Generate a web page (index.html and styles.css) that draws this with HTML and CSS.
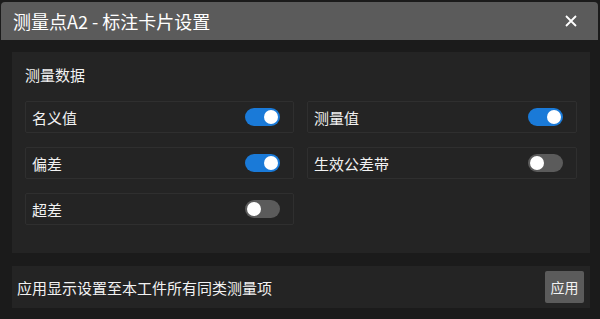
FILE: index.html
```html
<!DOCTYPE html>
<html>

<head>
    <meta charset="utf-8">
    <title>标注卡片设置</title>
    <link rel="stylesheet" href="styles.css">
</head>

<body>
    <div class="dialogo">
        <div class="cabecalho">
            <span class="titulo">测量点A2 - 标注卡片设置</span>
            <span class="fechar">
                <svg width="14" height="14" viewBox="0 0 14 14">
                    <path d="M2 2 L12 12 M12 2 L2 12" stroke="#ffffff" stroke-width="1.8" fill="none" />
                </svg>
            </span>
        </div>

        <div class="corpo">
            <div class="painel">
                <div class="painel-titulo">测量数据</div>
                <div class="grade">
                    <div class="item">
                        <span>名义值</span>
                        <span class="chave ligada"></span>
                    </div>
                    <div class="item">
                        <span>测量值</span>
                        <span class="chave ligada"></span>
                    </div>
                    <div class="item">
                        <span>偏差</span>
                        <span class="chave ligada"></span>
                    </div>
                    <div class="item">
                        <span>生效公差带</span>
                        <span class="chave"></span>
                    </div>
                    <div class="item">
                        <span>超差</span>
                        <span class="chave"></span>
                    </div>
                </div>
            </div>

            <div class="rodape">
                <span>应用显示设置至本工件所有同类测量项</span>
                <button class="botao">应用</button>
            </div>
        </div>
    </div>
</body>

</html>
```

FILE: styles.css
```css
* {
    box-sizing: border-box;
    font-family: "Noto Sans CJK SC", "Noto Sans", sans-serif;
}

body {
    margin: 0;
    background-color: #1b1b1b;
    color: #f2f2f2;
}

.dialogo {
    margin: 2px 2px 0 1px;
    background-color: #1b1b1b;
}

.cabecalho {
    display: flex;
    align-items: center;
    justify-content: space-between;
    height: 38px;
    padding: 0 20px 0 12px;
    background-color: #5b5b5b;
    border-radius: 4px 4px 0 0;
}

.titulo {
    font-size: 18px;
    color: #ffffff;
}

.fechar {
    display: flex;
}

.corpo {
    padding: 12px 8px 12px 11px;
}

.painel {
    background-color: #242424;
    padding: 12px 13px 28px 13px;
}

.painel-titulo {
    font-size: 15px;
    line-height: 22px;
    margin-bottom: 15px;
}

.grade {
    display: grid;
    grid-template-columns: 269px 270px;
    column-gap: 13px;
    row-gap: 14px;
}

.item {
    display: flex;
    align-items: center;
    justify-content: space-between;
    height: 32px;
    padding: 0 13px 0 6px;
    border: 1px solid #2f2f2f;
    border-radius: 2px;
    font-size: 15px;
}

.chave {
    position: relative;
    width: 35px;
    height: 18px;
    border-radius: 9px;
    background-color: #5b5b5b;
}

.chave::after {
    content: "";
    position: absolute;
    top: 2px;
    left: 2px;
    width: 14px;
    height: 14px;
    border-radius: 50%;
    background-color: #ffffff;
}

.chave.ligada {
    background-color: #1a7ad8;
}

.chave.ligada::after {
    left: 19px;
}

.rodape {
    display: flex;
    align-items: center;
    justify-content: space-between;
    height: 42px;
    margin-top: 13px;
    padding: 0 6px 0 5px;
    background-color: #242424;
    font-size: 15px;
}

.botao {
    width: 39px;
    height: 32px;
    padding: 0;
    border: none;
    border-radius: 2px;
    background-color: #5b5b5b;
    color: #f2f2f2;
    font-size: 14px;
}
```
